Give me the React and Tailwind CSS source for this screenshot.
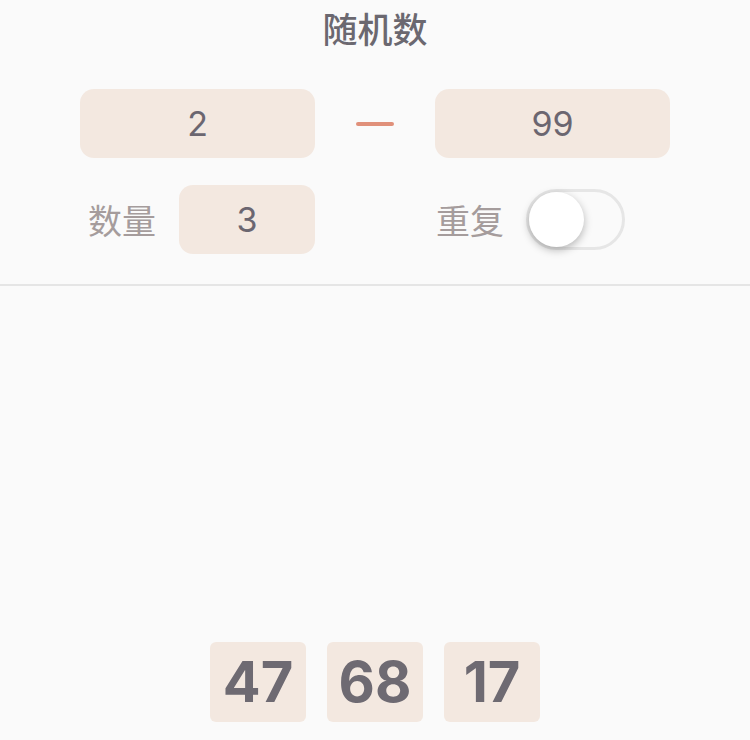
const cjk = { fontFamily: '"Noto Sans CJK SC", "Noto Sans", sans-serif' };
const num = { fontFamily: 'Inter, "Noto Sans CJK SC", sans-serif' };

export default function App() {
  const results = [47, 68, 17];

  return (
    <div
      className="w-[750px] h-[740px] bg-[#fafafa] flex flex-col overflow-hidden"
      style={cjk}
    >
      {/* 设置区域 */}
      <div className="h-[284px] flex flex-col items-center">
        <h1 className="mt-[6px] h-[44px] leading-[44px] text-[35px] font-medium text-[#6b6870]">
          随机数
        </h1>

        <div className="mt-[39px] w-[590px] flex items-center justify-between">
          <div
            className="w-[235px] h-[69px] rounded-[14px] bg-[#f3e8e0] flex items-center justify-center text-[34px] text-[#6b6670]"
            style={num}
          >
            2
          </div>
          <div className="w-[38px] h-[4px] rounded-full bg-[#e0907a]" />
          <div
            className="w-[235px] h-[69px] rounded-[14px] bg-[#f3e8e0] flex items-center justify-center text-[34px] text-[#6b6670]"
            style={num}
          >
            99
          </div>
        </div>

        <div className="mt-[27px] w-[590px] flex items-center">
          <div className="w-[235px] flex items-center justify-end">
            <span className="mr-[23px] text-[34px] text-[#a59c9c]">数量</span>
            <div
              className="w-[136px] h-[69px] rounded-[14px] bg-[#f3e8e0] flex items-center justify-center text-[34px] text-[#6b6670]"
              style={num}
            >
              3
            </div>
          </div>
          <div className="ml-[121px] flex items-center">
            <span className="text-[34px] text-[#a59c9c]">重复</span>
            <div className="ml-[22px] w-[99px] h-[61px] rounded-full border-[3px] border-[#e6e6e6] bg-[#fafafa] relative">
              <div className="absolute left-0 top-0 w-[55px] h-[55px] rounded-full bg-white shadow-[0_3px_8px_rgba(0,0,0,0.28)]" />
            </div>
          </div>
        </div>
      </div>

      <div className="h-[2px] bg-[#e5e5e5]" />

      {/* 结果 */}
      <div className="flex-1 flex items-end justify-center pb-[18px] gap-[21px]">
        {results.map((n) => (
          <div
            key={n}
            className="w-[96px] h-[80px] rounded-[6px] bg-[#f3e8e0] flex items-center justify-center text-[56px] font-bold text-[#6e6a72]"
            style={num}
          >
            {n}
          </div>
        ))}
      </div>
    </div>
  );
}
